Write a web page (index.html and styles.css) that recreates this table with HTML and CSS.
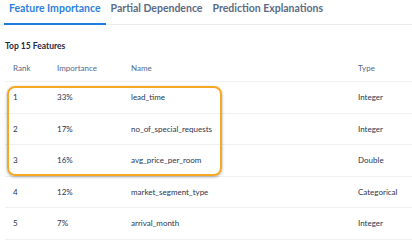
FILE: index.html
```html
<!DOCTYPE html>
<html>
<head>
<meta charset="utf-8">
<link rel="stylesheet" href="styles.css">
</head>
<body>
<div class="tabs">
  <div class="tab active">Feature Importance</div>
  <div class="tab">Partial Dependence</div>
  <div class="tab">Prediction Explanations</div>
</div>
<div class="content">
  <div class="title">Top 15 Features</div>
  <div class="table">
    <div class="row head">
      <div class="c rank">Rank</div>
      <div class="c imp">Importance</div>
      <div class="c name">Name</div>
      <div class="c type">Type</div>
    </div>
    <div class="row">
      <div class="c rank">1</div>
      <div class="c imp">33%</div>
      <div class="c name">lead_time</div>
      <div class="c type">Integer</div>
    </div>
    <div class="row">
      <div class="c rank">2</div>
      <div class="c imp">17%</div>
      <div class="c name">no_of_special_requests</div>
      <div class="c type">Integer</div>
    </div>
    <div class="row">
      <div class="c rank">3</div>
      <div class="c imp">16%</div>
      <div class="c name">avg_price_per_room</div>
      <div class="c type">Double</div>
    </div>
    <div class="row">
      <div class="c rank">4</div>
      <div class="c imp">12%</div>
      <div class="c name">market_segment_type</div>
      <div class="c type">Categorical</div>
    </div>
    <div class="row">
      <div class="c rank">5</div>
      <div class="c imp">7%</div>
      <div class="c name">arrival_month</div>
      <div class="c type">Integer</div>
    </div>
    <div class="highlight"></div>
  </div>
</div>
</body>
</html>
```
FILE: styles.css
```css
* { box-sizing: border-box; }
html, body { margin: 0; padding: 0; background: #fff; }
body {
  width: 412px;
  height: 240px;
  overflow: hidden;
  font-family: Lato, "Open Sans", sans-serif;
  color: #2b3650;
}
.tabs {
  display: flex;
  height: 25px;
  border-bottom: 1px solid #ebedf0;
  padding-left: 4px;
}
.tab {
  font-size: 10.5px;
  font-weight: 700;
  color: #5c6b86;
  padding: 0 5px;
  line-height: 16px;
}
.tab.active {
  color: #2f7fdd;
  border-bottom: 2px solid #1f7ae0;
  height: 25px;
}
.content {
  padding: 0 0 0 5px;
}
.title {
  font-size: 8.5px;
  font-weight: 700;
  color: #1f2a44;
  margin-top: 15px;
  line-height: 12px;
}
.table {
  position: relative;
  margin-top: 2px;
}
.row {
  display: flex;
  align-items: center;
  height: 31.5px;
  border-bottom: 1px solid #eef0f3;
  font-size: 8px;
  color: #2b3650;
}
.row.head {
  height: 28px;
  color: #55688a;
}
.c { white-space: nowrap; }
.rank { width: 52px; padding-left: 8px; }
.imp { width: 74px; }
.name { width: 227px; }
.type { flex: 1; }
.highlight {
  position: absolute;
  left: 2px;
  top: 32px;
  width: 215px;
  height: 90px;
  border: 2px solid #f7a823;
  border-radius: 8px;
  box-shadow: 0 1px 3px rgba(0,0,0,0.35);
  pointer-events: none;
}
```
